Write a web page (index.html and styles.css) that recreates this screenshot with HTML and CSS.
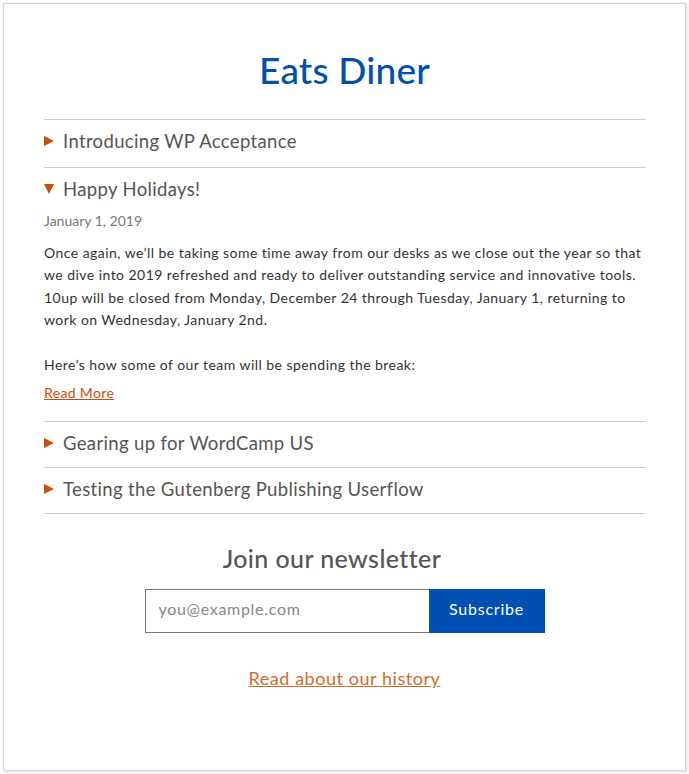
FILE: index.html
```html
<!DOCTYPE html>
<html lang="en">
<head>
<meta charset="utf-8">
<title>Eats Diner</title>
<link rel="stylesheet" href="styles.css">
</head>
<body>
<div class="card">
  <h1 class="site-title">Eats Diner</h1>
  <div class="posts">
    <div class="post first">
      <div class="post-title"><span class="tri tri-right"></span>Introducing WP Acceptance</div>
    </div>
    <div class="post open">
      <div class="post-title"><span class="tri tri-down"></span>Happy Holidays!</div>
      <div class="post-body">
        <div class="date">January 1, 2019</div>
        <p>Once again, we’ll be taking some time away from our desks as we close out the year so that we dive into 2019 refreshed and ready to deliver outstanding service and innovative tools. 10up will be closed from Monday, December 24 through Tuesday, January 1, returning to work on Wednesday, January 2nd.</p>
        <p>Here’s how some of our team will be spending the break:</p>
        <a class="read-more" href="#">Read More</a>
      </div>
    </div>
    <div class="post">
      <div class="post-title"><span class="tri tri-right"></span>Gearing up for WordCamp US</div>
    </div>
    <div class="post">
      <div class="post-title"><span class="tri tri-right"></span>Testing the Gutenberg Publishing Userflow</div>
    </div>
  </div>
  <div class="newsletter">
    <h2>Join our newsletter</h2>
    <form class="sub-form">
      <input type="email" placeholder="you@example.com">
      <button type="button">Subscribe</button>
    </form>
  </div>
  <div class="history"><a href="#">Read about our history</a></div>
</div>
</body>
</html>
```
FILE: styles.css
```css
html, body { margin: 0; padding: 0; background: #fff; }
body { font-family: Lato, "Open Sans", sans-serif; color: #333; }
.card {
  margin: 3px;
  border: 1px solid #d6d6d6;
  box-shadow: 1px 1px 3px rgba(0,0,0,0.15);
  box-sizing: border-box;
  width: 683px;
  height: 768px;
  padding: 0 40px;
}
.site-title {
  margin: 0;
  padding-top: 44px;
  height: 71px;
  text-align: center;
  font-size: 37px;
  font-weight: 500;
  color: #0050b3;
  line-height: 44px;
  letter-spacing: 0.2px;
}
.posts { border-top: 1px solid #ccc; }
.post { border-bottom: 1px solid #ccc; }
.post-title {
  display: flex;
  align-items: center;
  height: 45px;
  padding-bottom: 3px;
  box-sizing: border-box;
  font-size: 18.5px;
  color: #555;
  letter-spacing: 0.35px;
}
.first .post-title { height: 47px; padding-bottom: 5px; }
.tri { display: inline-block; width: 0; height: 0; margin-right: 9px; }
.tri-right {
  border-top: 5px solid transparent;
  border-bottom: 5px solid transparent;
  border-left: 10px solid #cc4e0b;
}
.tri-down {
  border-left: 5.5px solid transparent;
  border-right: 5.5px solid transparent;
  border-top: 10px solid #cc4e0b;
}
.post-body { padding-bottom: 20px; font-size: 14px; }
.date { color: #777; font-size: 14px; line-height: 20px; margin-top: -2px; }
.post-body p { margin: 11px 0 22px; line-height: 22.4px; letter-spacing: 0.45px; }
.post-body p + p { margin-top: 0; margin-bottom: 8px; }
.read-more { color: #cc4e0b; font-size: 14px; letter-spacing: 0.35px; }
.newsletter { text-align: center; }
.newsletter h2 {
  margin: 0;
  padding-top: 18px;
  padding-right: 25px;
  font-size: 25px;
  font-weight: 500;
  color: #555;
  line-height: 52px;
  letter-spacing: 0.4px;
}
.sub-form { display: flex; justify-content: center; margin-top: 5px; }
.sub-form input {
  width: 284px;
  height: 44px;
  box-sizing: border-box;
  border: 1px solid #777;
  border-right: 0;
  padding: 0 13px 5px;
  font-family: inherit;
  font-size: 16px;
  letter-spacing: 0.7px;
  color: #333;
  outline: none;
}
.sub-form input::placeholder { color: #888; }
.sub-form button {
  width: 116px;
  height: 44px;
  border: 0;
  padding: 0 0 5px;
  background: #0050b3;
  color: #fff;
  font-family: inherit;
  font-size: 16px;
  letter-spacing: 0.8px;
}
.history { text-align: center; margin-top: 34px; }
.history a { color: #d36b2c; font-size: 18px; letter-spacing: 0.55px; }
```
